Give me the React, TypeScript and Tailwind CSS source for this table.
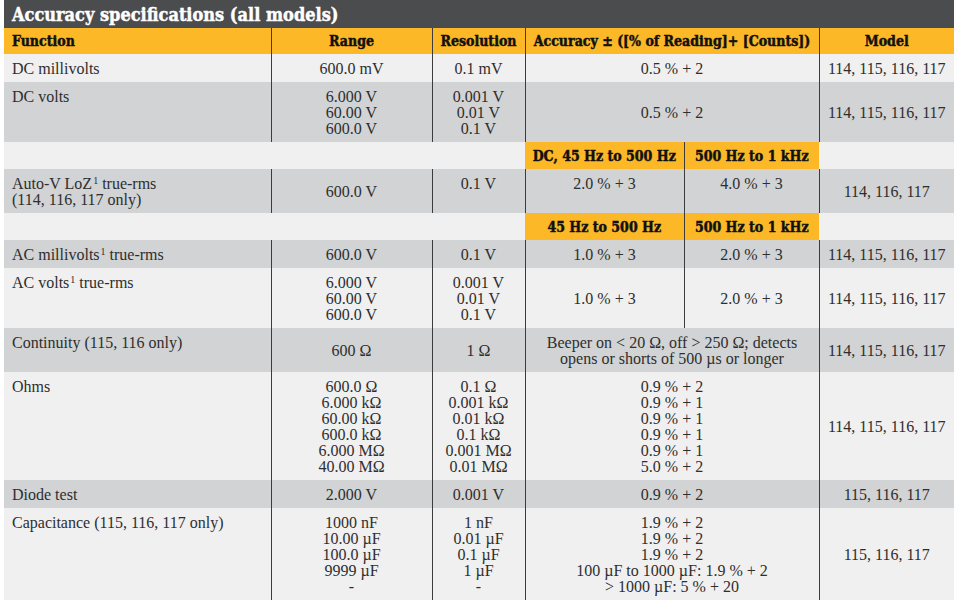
const body = "font-['Liberation_Serif',serif] text-[16px] leading-[16px] text-[#2e2e2e]";
const heavy =
  "font-['DejaVu_Serif_Condensed','DejaVu_Serif',serif] font-bold [-webkit-text-stroke:0.45px_currentColor]";

type V = "top" | "middle";

function Cell({
  children,
  v = "middle",
  align = "center",
  line = true,
}: {
  children?: React.ReactNode;
  v?: V;
  align?: "left" | "center";
  line?: boolean;
}) {
  return (
    <td
      className={`pt-[7px] pb-[5px] ${v === "top" ? "align-top" : "align-middle"} ${
        align === "left" ? "text-left pl-[8px]" : "text-center"
      } ${line ? "border-l border-[#3c3c3c]" : ""}`}
    >
      {children}
    </td>
  );
}

function Lines({ items }: { items: string[] }) {
  return (
    <>
      {items.map((t, i) => (
        <div key={i}>{t}</div>
      ))}
    </>
  );
}

function Sup() {
  return <span className="text-[10px] leading-none relative -top-[5px] ml-[1px]">1</span>;
}

function SubHead({ a, b, bg }: { a: string; b: string; bg: string }) {
  return (
    <tr className={`${bg} h-[27px]`}>
      <td colSpan={3} />
      <td className={`bg-[#fcb827] text-center ${heavy} text-[14px] text-[#111]`}>{a}</td>
      <td className={`bg-[#fcb827] text-center border-l border-[#3c3c3c] ${heavy} text-[14px] text-[#111]`}>{b}</td>
      <td />
    </tr>
  );
}

export default function App() {
  const light = "bg-[#f0f0f0]";
  const gray = "bg-[#d1d3d4]";
  return (
    <div className="bg-white w-[960px] h-[604px] overflow-hidden">
      <div className="ml-[4px] w-[950px]">
        <div className={`h-[28px] bg-[#4b4c4e] text-white ${heavy} text-[18px] leading-[29px] pl-[8px]`}>
          Accuracy specifications (all models)
        </div>
        <table className={`w-[950px] table-fixed border-collapse ${body}`}>
          <colgroup>
            <col className="w-[267px]" />
            <col className="w-[161px]" />
            <col className="w-[93px]" />
            <col className="w-[159px]" />
            <col className="w-[135px]" />
            <col className="w-[135px]" />
          </colgroup>
          <thead>
            <tr className={`bg-[#fcb827] h-[26px] ${heavy} text-[14px] text-[#111]`}>
              <th className="text-left pl-[8px] font-bold">Function</th>
              <th className="border-l border-[#3c3c3c] font-bold">Range</th>
              <th className="border-l border-[#3c3c3c] font-bold">Resolution</th>
              <th colSpan={2} className="border-l border-[#3c3c3c] font-bold whitespace-nowrap">
                Accuracy ± ([% of Reading]+ [Counts])
              </th>
              <th className="border-l border-[#3c3c3c] font-bold">Model</th>
            </tr>
          </thead>
          <tbody>
            <tr className={light}>
              <Cell align="left" line={false} v="top">DC millivolts</Cell>
              <Cell>600.0 mV</Cell>
              <Cell>0.1 mV</Cell>
              <td colSpan={2} className="border-l border-[#3c3c3c] text-center pt-[7px] pb-[5px]">0.5 % + 2</td>
              <Cell>114, 115, 116, 117</Cell>
            </tr>
            <tr className={gray}>
              <Cell align="left" line={false} v="top">DC volts</Cell>
              <Cell v="top"><Lines items={["6.000 V", "60.00 V", "600.0 V"]} /></Cell>
              <Cell v="top"><Lines items={["0.001 V", "0.01 V", "0.1 V"]} /></Cell>
              <td colSpan={2} className="border-l border-[#3c3c3c] text-center pt-[7px] pb-[5px]">0.5 % + 2</td>
              <Cell>114, 115, 116, 117</Cell>
            </tr>
            <SubHead a="DC, 45 Hz to 500 Hz" b="500 Hz to 1 kHz" bg={light} />
            <tr className={gray}>
              <Cell align="left" line={false} v="top">
                <div>Auto-V LoZ<Sup /> true-rms</div>
                <div>(114, 116, 117 only)</div>
              </Cell>
              <Cell>600.0 V</Cell>
              <Cell v="top">0.1 V</Cell>
              <Cell v="top">2.0 % + 3</Cell>
              <Cell v="top">4.0 % + 3</Cell>
              <Cell>114, 116, 117</Cell>
            </tr>
            <SubHead a="45 Hz to 500 Hz" b="500 Hz to 1 kHz" bg={light} />
            <tr className={gray}>
              <Cell align="left" line={false} v="top">AC millivolts<Sup /> true-rms</Cell>
              <Cell>600.0 V</Cell>
              <Cell>0.1 V</Cell>
              <Cell>1.0 % + 3</Cell>
              <Cell>2.0 % + 3</Cell>
              <Cell>114, 115, 116, 117</Cell>
            </tr>
            <tr className={light}>
              <Cell align="left" line={false} v="top">AC volts<Sup /> true-rms</Cell>
              <Cell v="top"><Lines items={["6.000 V", "60.00 V", "600.0 V"]} /></Cell>
              <Cell v="top"><Lines items={["0.001 V", "0.01 V", "0.1 V"]} /></Cell>
              <Cell>1.0 % + 3</Cell>
              <Cell>2.0 % + 3</Cell>
              <Cell>114, 115, 116, 117</Cell>
            </tr>
            <tr className={gray}>
              <Cell align="left" line={false} v="top">Continuity (115, 116 only)</Cell>
              <Cell>600 Ω</Cell>
              <Cell>1 Ω</Cell>
              <td colSpan={2} className="border-l border-[#3c3c3c] text-center pt-[7px] pb-[5px]">
                <div>Beeper on &lt; 20 Ω, off &gt; 250 Ω; detects</div>
                <div>opens or shorts of 500 µs or longer</div>
              </td>
              <Cell>114, 115, 116, 117</Cell>
            </tr>
            <tr className={light}>
              <Cell align="left" line={false} v="top">Ohms</Cell>
              <Cell v="top">
                <Lines items={["600.0 Ω", "6.000 kΩ", "60.00 kΩ", "600.0 kΩ", "6.000 MΩ", "40.00 MΩ"]} />
              </Cell>
              <Cell v="top">
                <Lines items={["0.1 Ω", "0.001 kΩ", "0.01 kΩ", "0.1 kΩ", "0.001 MΩ", "0.01 MΩ"]} />
              </Cell>
              <td colSpan={2} className="border-l border-[#3c3c3c] text-center align-top pt-[7px] pb-[5px]">
                <Lines items={["0.9 % + 2", "0.9 % + 1", "0.9 % + 1", "0.9 % + 1", "0.9 % + 1", "5.0 % + 2"]} />
              </td>
              <Cell>114, 115, 116, 117</Cell>
            </tr>
            <tr className={gray}>
              <Cell align="left" line={false} v="top">Diode test</Cell>
              <Cell>2.000 V</Cell>
              <Cell>0.001 V</Cell>
              <td colSpan={2} className="border-l border-[#3c3c3c] text-center pt-[7px] pb-[5px]">0.9 % + 2</td>
              <Cell>115, 116, 117</Cell>
            </tr>
            <tr className={light}>
              <Cell align="left" line={false} v="top">Capacitance (115, 116, 117 only)</Cell>
              <Cell v="top">
                <Lines items={["1000 nF", "10.00 µF", "100.0 µF", "9999 µF", "-"]} />
              </Cell>
              <Cell v="top">
                <Lines items={["1 nF", "0.01 µF", "0.1 µF", "1 µF", "-"]} />
              </Cell>
              <td colSpan={2} className="border-l border-[#3c3c3c] text-center align-top pt-[7px] pb-[5px]">
                <Lines items={["1.9 % + 2", "1.9 % + 2", "1.9 % + 2", "100 µF to 1000 µF: 1.9 % + 2", "> 1000 µF: 5 % + 20"]} />
              </td>
              <Cell>115, 116, 117</Cell>
            </tr>
          </tbody>
        </table>
      </div>
    </div>
  );
}
